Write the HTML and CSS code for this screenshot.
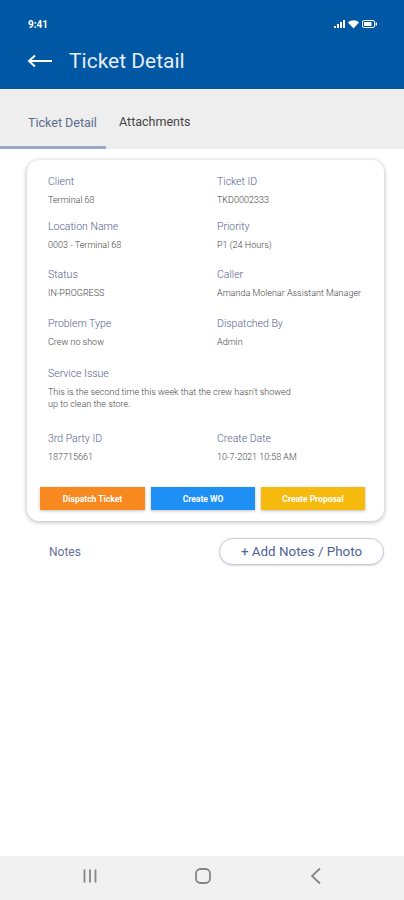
FILE: index.html
```html
<!DOCTYPE html>
<html lang="en">
<head>
    <meta charset="UTF-8">
    <meta name="viewport" content="width=device-width, initial-scale=1.0">
    <title>Ticket Detail</title>
    <link rel="stylesheet" href="styles.css">
</head>
<body>
    <div class="phone">
        <div class="header">
            <div class="status-bar">
                <span class="time">9:41</span>
                <svg class="status-icons" width="46" height="10" viewBox="0 0 46 10">
                    <rect x="0" y="7" width="2" height="2" fill="#fff"/>
                    <rect x="3" y="5" width="2" height="4" fill="#fff"/>
                    <rect x="6" y="3" width="2" height="6" fill="#fff"/>
                    <rect x="9" y="1" width="2" height="8" fill="#fff"/>
                    <path d="M14 3.500 C17 0.500 22 0.500 25 3.500 L19.500 9.500 Z" fill="#fff"/>
                    <rect x="28.500" y="1.500" width="12" height="7" rx="1.500" fill="none" stroke="#fff"/>
                    <rect x="30" y="3" width="7.500" height="4" fill="#fff"/>
                    <rect x="41.500" y="3.500" width="1.500" height="3" fill="#fff"/>
                </svg>
            </div>
            <div class="title-bar">
                <svg class="back" width="26" height="14" viewBox="0 0 26 14">
                    <path d="M25 7H2M8 1.500 2 7l6 5.500" fill="none" stroke="#fff" stroke-width="2"/>
                </svg>
                <h1>Ticket Detail</h1>
            </div>
        </div>

        <div class="tabs">
            <div class="tab active">Ticket Detail</div>
            <div class="tab">Attachments</div>
        </div>

        <div class="content">
            <div class="card">
                <div class="row">
                    <div class="field"><label>Client</label><p>Terminal 68</p></div>
                    <div class="field"><label>Ticket ID</label><p>TKD0002333</p></div>
                </div>
                <div class="row row-2">
                    <div class="field"><label>Location Name</label><p>0003 - Terminal 68</p></div>
                    <div class="field"><label>Priority</label><p>P1 (24 Hours)</p></div>
                </div>
                <div class="row row-3">
                    <div class="field"><label>Status</label><p>IN-PROGRESS</p></div>
                    <div class="field"><label>Caller</label><p>Amanda Molenar Assistant Manager</p></div>
                </div>
                <div class="row row-4">
                    <div class="field"><label>Problem Type</label><p>Crew no show</p></div>
                    <div class="field"><label>Dispatched By</label><p>Admin</p></div>
                </div>
                <div class="field issue">
                    <label>Service Issue</label>
                    <p>This is the second time this week that the crew hasn't showed<br>up to clean the store.</p>
                </div>
                <div class="row row-6">
                    <div class="field"><label>3rd Party ID</label><p>187715661</p></div>
                    <div class="field"><label>Create Date</label><p>10-7-2021 10:58 AM</p></div>
                </div>
                <div class="actions">
                    <button class="orange">Dispatch Ticket</button>
                    <button class="blue">Create WO</button>
                    <button class="yellow">Create Proposal</button>
                </div>
            </div>

            <div class="notes">
                <span>Notes</span>
                <button class="add-notes">+ Add Notes / Photo</button>
            </div>
        </div>

        <div class="nav-bar">
            <svg width="16" height="16" viewBox="0 0 16 16">
                <path d="M2.500 1.500v13M8 1.500v13M13.500 1.500v13" stroke="#858585" stroke-width="1.800" fill="none"/>
            </svg>
            <svg width="18" height="18" viewBox="0 0 18 18">
                <rect x="2" y="2" width="14" height="14" rx="4.500" stroke="#858585" stroke-width="1.800" fill="none"/>
            </svg>
            <svg class="nav-back" width="12" height="18" viewBox="0 0 12 18">
                <path d="M10 1.500 2 9l8 7.500" stroke="#858585" stroke-width="1.800" fill="none"/>
            </svg>
        </div>
    </div>
</body>
</html>
```

FILE: styles.css
```css
* {
    box-sizing: border-box;
}

body {
    margin: 0;
    background: #fff;
    font-family: Roboto, "Open Sans", sans-serif;
}

.phone {
    width: 404px;
    height: 900px;
    display: flex;
    flex-direction: column;
    overflow: hidden;
}

.header {
    height: 89px;
    background-color: #0057a3;
    color: #fff;
    padding: 17px 28px 0 28px;
}

.status-bar {
    display: flex;
    justify-content: space-between;
    align-items: center;
    height: 14px;
}

.time {
    font-size: 10px;
    font-weight: 700;
}

.status-icons {
    margin-right: -4px;
}

.title-bar {
    display: flex;
    align-items: center;
    gap: 16px;
    margin-top: 10px;
    height: 40px;
}

.back {
    margin-left: -1px;
}

h1 {
    margin: 0;
    font-size: 21px;
    font-weight: 400;
    color: #e6edf7;
}

.tabs {
    height: 60px;
    background-color: #eeeeee;
    display: flex;
    font-size: 12.500px;
}

.tab {
    height: 60px;
    padding: 25px 0 0 13px;
    color: #444;
}

.tab.active {
    width: 106px;
    padding: 26px 0 0 28px;
    color: #5b6c90;
    border-bottom: 3px solid #9aa8cc;
}

.content {
    flex: 1;
    padding: 11px 20px 0 27px;
}

.card {
    background: #fff;
    border-radius: 12px;
    box-shadow: 0 1px 5px rgba(0, 0, 0, 0.3);
    padding: 15px 13px 11px 13px;
}

.row {
    display: grid;
    grid-template-columns: 169px 1fr;
    padding-left: 8px;
}

.row-2 {
    margin-top: 14px;
}

.row-3 {
    margin-top: 17px;
}

.row-4 {
    margin-top: 18px;
}

.row-6 {
    margin-top: 22px;
}

.issue {
    margin-top: 19px;
    padding-left: 8px;
}

.field label {
    display: block;
    font-size: 10.500px;
    line-height: 14px;
    font-weight: 300;
    color: #56618e;
}

.field p {
    margin: 5px 0 0 0;
    font-size: 9px;
    line-height: 12px;
    font-weight: 300;
    color: #444;
    white-space: nowrap;
}

.actions {
    display: flex;
    gap: 6px;
    margin-top: 24px;
}

.actions button {
    width: 104px;
    height: 23px;
    border: none;
    color: #fff;
    font-family: inherit;
    font-size: 8.500px;
    font-weight: 700;
    box-shadow: 0 1px 3px rgba(0, 0, 0, 0.25);
}

.actions .orange {
    width: 105px;
    background-color: #f7891f;
}

.blue {
    background-color: #1e8ff5;
}

.yellow {
    background-color: #f6b90e;
}

.notes {
    display: flex;
    justify-content: space-between;
    align-items: center;
    margin-top: 17px;
    padding-left: 22px;
    font-size: 12px;
    color: #67729a;
}

.add-notes {
    width: 165px;
    height: 27px;
    background: #fff;
    border: 1px solid #c5cad6;
    border-radius: 14px;
    font-family: inherit;
    font-size: 13.400px;
    color: #4f6293;
    box-shadow: 0 1px 2px rgba(0, 0, 0, 0.15);
}

.nav-bar {
    height: 44px;
    background-color: #f1f1f1;
    display: flex;
    align-items: center;
    padding: 0 0 4px 82px;
    gap: 96px;
}

.nav-back {
    margin-left: 2px;
}
```
